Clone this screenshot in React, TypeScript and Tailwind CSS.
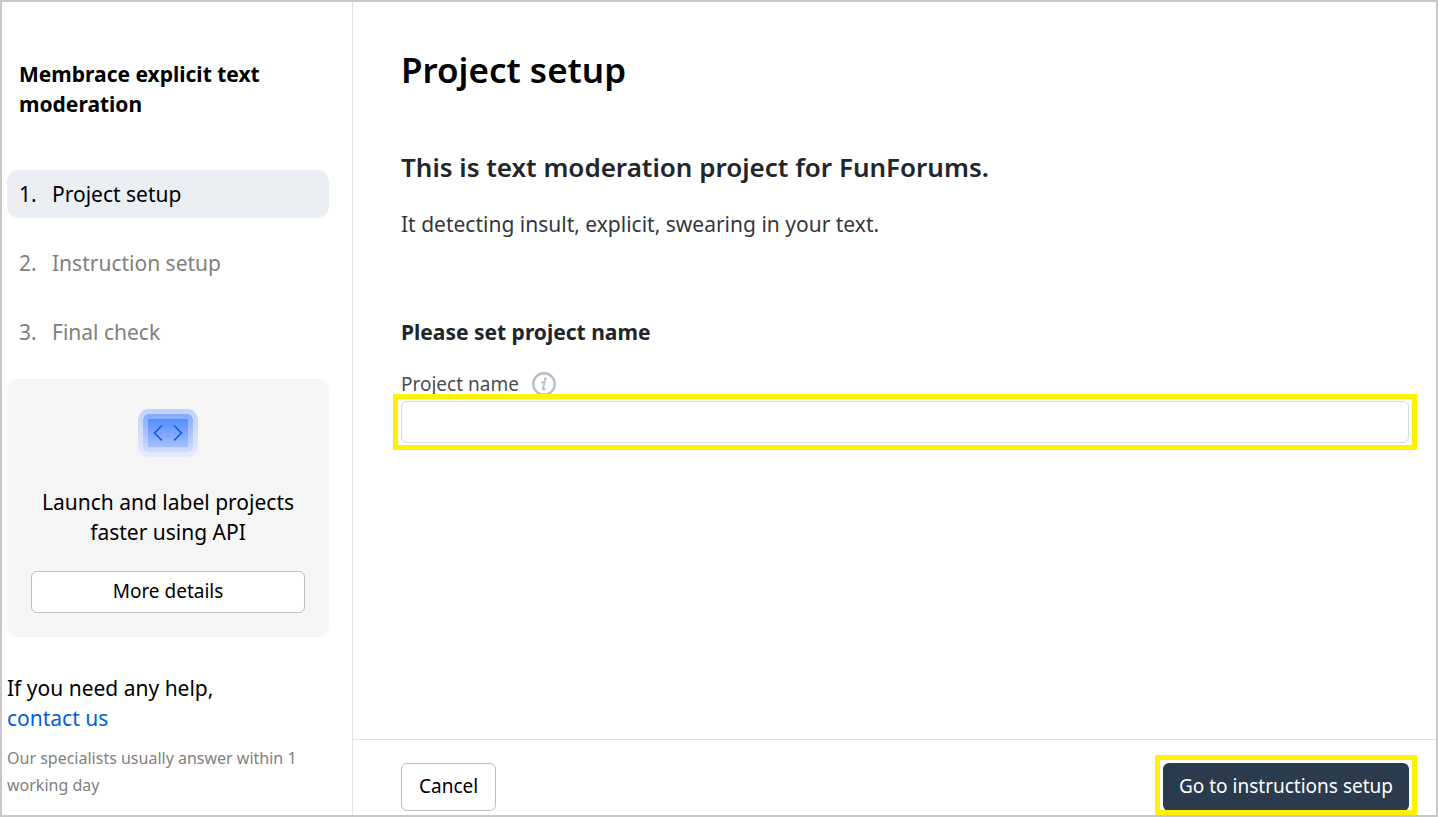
const steps = ["Project setup", "Instruction setup", "Final check"];

function ApiIcon() {
  return (
    <svg width="60" height="48" viewBox="0 0 60 48" fill="none" aria-hidden="true">
      <defs>
        <linearGradient id="outer" x1="0" y1="0" x2="0" y2="1">
          <stop offset="0" stopColor="#bfd2fc" />
          <stop offset="1" stopColor="#e6ebf8" />
        </linearGradient>
        <linearGradient id="middle" x1="0" y1="0" x2="0" y2="1">
          <stop offset="0" stopColor="#82aafd" />
          <stop offset="1" stopColor="#d0dcfa" />
        </linearGradient>
        <linearGradient id="inner" x1="0" y1="0" x2="0" y2="1">
          <stop offset="0" stopColor="#558cff" />
          <stop offset="1" stopColor="#a5bffe" />
        </linearGradient>
      </defs>
      <rect width="60" height="48" rx="11" fill="url(#outer)" />
      <rect x="5" y="5" width="50" height="38" rx="6" fill="url(#middle)" />
      <rect x="10" y="10" width="40" height="28" rx="1" fill="url(#inner)" />
      <path d="M24 16.500 16.500 24l7.500 7.500M36 16.500 43.500 24 36 31.500" stroke="#0d55dc" strokeWidth="1.500" />
    </svg>
  );
}

function InfoIcon() {
  return (
    <svg width="24" height="24" viewBox="0 0 24 24" fill="none" aria-hidden="true">
      <circle cx="12" cy="12" r="10.700" stroke="#b8bfc6" strokeWidth="2.400" />
      <circle cx="13.300" cy="6.700" r="1.500" fill="#b8bfc6" />
      <path d="M9 10.500c1.600-.1 2.600-.3 3.700-.8l-1.700 6.800c-.2 1 .8 1 2.300-.1" stroke="#b8bfc6" strokeWidth="1.900" />
    </svg>
  );
}

function Sidebar() {
  return (
    <aside className="w-[351px] shrink-0 border-r border-[#dfe4ec] pl-[5px] pr-[23px] pt-[57px]">
      <h2 className="px-3 text-[21px] font-bold leading-[30px]">Membrace explicit text moderation</h2>
      <nav className="mt-[51px]" aria-label="Setup steps">
        <ol className="flex flex-col gap-[21px]">
          {steps.map((step, i) => (
            <li key={step}>
              <a
                href="#"
                aria-current={i === 0 ? "step" : undefined}
                className={
                  i === 0
                    ? "flex h-12 items-center rounded-xl bg-[#ebeff4] px-3 pt-0.5 text-[21px]"
                    : "flex h-12 items-center rounded-xl px-3 pt-0.5 text-[21px] text-[#808080]"
                }
              >
                <span className="w-[33px]">{i + 1}.</span>
                {step}
              </a>
            </li>
          ))}
        </ol>
      </nav>
      <section className="mt-[23px] flex flex-col items-center rounded-xl bg-[#f5f5f5] px-6 pb-6 pt-[30px]">
        <ApiIcon />
        <p className="mt-[30px] text-center text-[21px] leading-[30px]">
          Launch and label projects
          <br />
          faster using API
        </p>
        <button type="button" className="mt-6 h-[42px] w-full rounded-md border border-[#b8bdc8] bg-white pb-0.5 text-[19px]">
          More details
        </button>
      </section>
      <p className="mt-9 text-[21px] leading-[30px]">
        If you need any help,
        <br />
        <a href="#" className="text-[#0060dc]">
          contact us
        </a>
      </p>
      <p className="mt-3 text-base leading-[27px] text-[#808080]">Our specialists usually answer within 1 working day</p>
    </aside>
  );
}

export default function App() {
  return (
    <div className="flex min-h-screen border-2 border-[#c8c8c8] bg-white font-['Noto_Sans',sans-serif] text-black">
      <Sidebar />
      <main className="flex min-w-0 flex-1 flex-col">
        <div className="flex-1 pl-12 pr-[27px] pt-11">
          <h1 className="text-[35px] font-semibold leading-[48px]">Project setup</h1>
          <h2 className="mt-[55px] text-[26px] font-semibold leading-[36px] text-[#21262b]">
            This is text moderation project for FunForums.
          </h2>
          <p className="mt-6 text-[21px] leading-[30px] text-[#33373d]">
            It detecting insult, explicit, swearing in your text.
          </p>
          <h3 className="mt-[78px] text-[21px] font-bold leading-[30px] text-[#21262b]">Please set project name</h3>
          <div className="mt-[22px] flex h-[30px] items-center gap-[13px]">
            <label htmlFor="project-name" className="text-[19px] text-[#4c4c4c]">
              Project name
            </label>
            <button type="button" aria-label="About the project name">
              <InfoIcon />
            </button>
          </div>
          <div className="relative mt-0.5">
            <input
              id="project-name"
              type="text"
              className="block h-[42px] w-full rounded-md border border-[#d9d9d9] bg-white px-3 text-[19px] outline-none"
            />
            <span className="pointer-events-none absolute -inset-x-2 -inset-y-[7px] border-[5px] border-[#fff200]" />
          </div>
        </div>
        <footer className="flex items-center justify-between border-t border-[#dfe4ec] pb-1 pl-12 pr-[27px] pt-[23px]">
          <button type="button" className="h-12 rounded-md border border-[#b8bdc8] bg-white px-[17px] pb-0.5 text-[19px]">
            Cancel
          </button>
          <div className="relative">
            <button type="button" className="block h-12 rounded-md bg-[#2b3b4e] px-4 pb-0.5 text-[19px] text-white">
              Go to instructions setup
            </button>
            <span className="pointer-events-none absolute -inset-x-2 -bottom-1 -top-2 border-[5px] border-[#fff200]" />
          </div>
        </footer>
      </main>
    </div>
  );
}
